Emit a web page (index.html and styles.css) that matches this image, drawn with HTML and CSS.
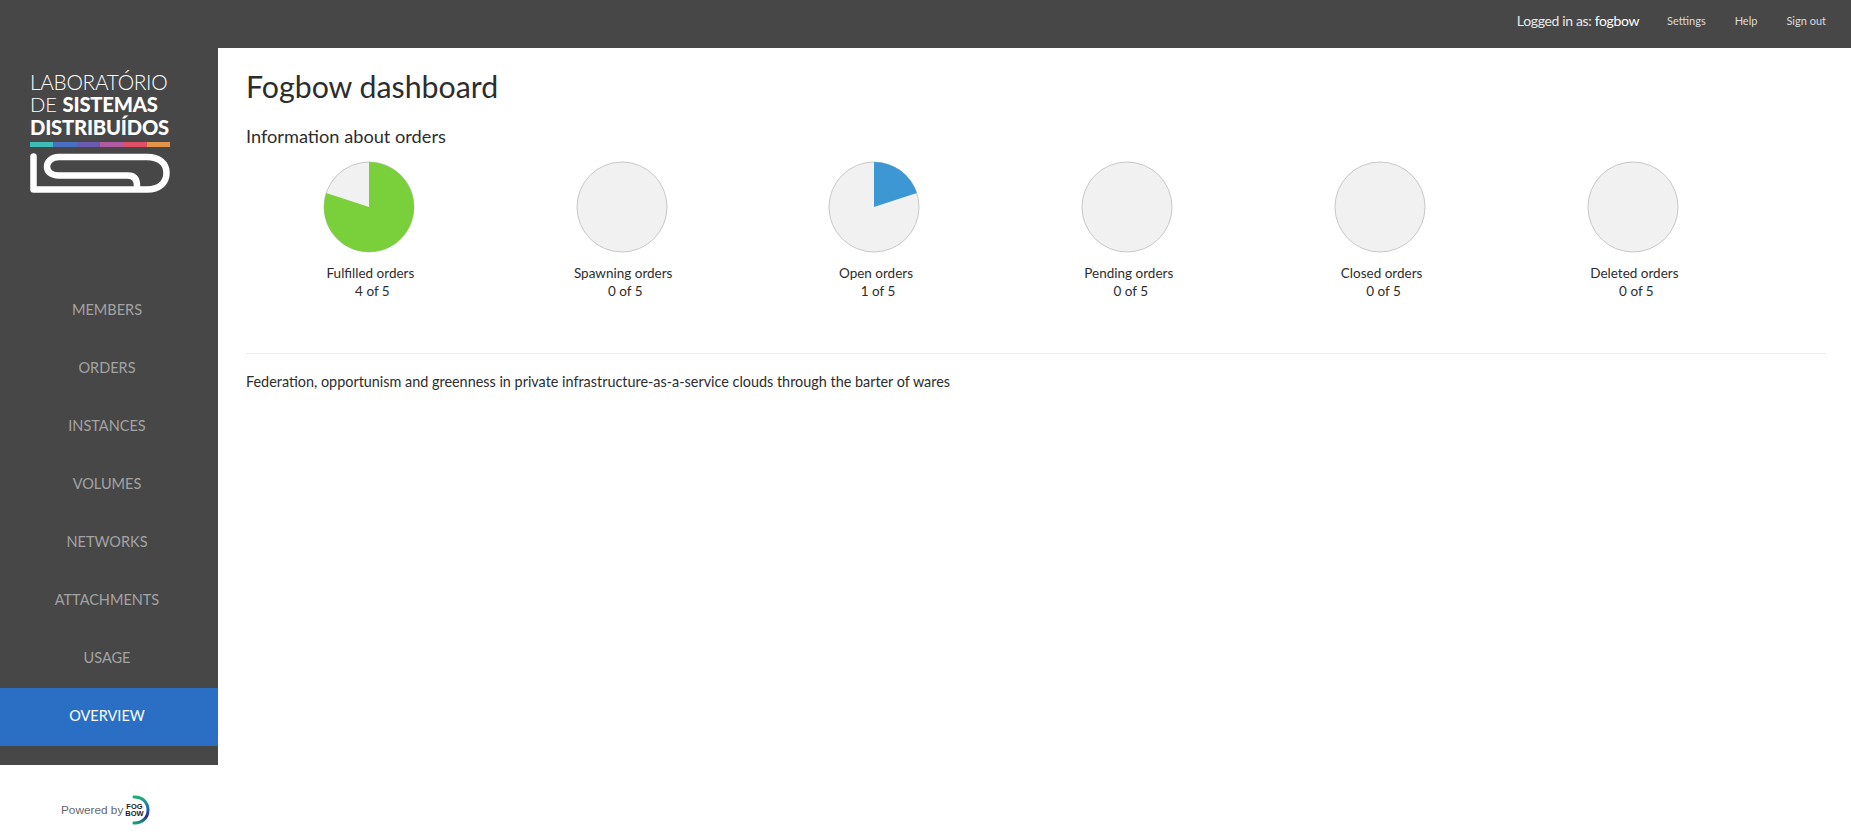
FILE: index.html
```html
<!DOCTYPE html>
<html lang="en">
<head>
<meta charset="utf-8">
<title>Fogbow dashboard</title>
<link rel="stylesheet" href="styles.css">
</head>
<body>
<header class="topbar">
  <div class="user">Logged in as: <strong>fogbow</strong></div>
  <a class="toplink" href="#">Settings</a>
  <a class="toplink" href="#">Help</a>
  <a class="toplink" href="#">Sign out</a>
</header>
<div class="layout">
  <aside class="left">
    <div class="sidebar">
      <div class="logo">
        <div class="logo-line l1">LABORATÓRIO</div>
        <div class="logo-line l2">DE <b>SISTEMAS</b></div>
        <div class="logo-line l3">DISTRIBUÍDOS</div>
        <div class="stripes"><i class="s1"></i><i class="s2"></i><i class="s3"></i><i class="s4"></i><i class="s5"></i><i class="s6"></i></div>
        <svg class="clip" width="140" height="41" viewBox="0 0 140 41" fill="none" stroke="#fff" stroke-width="6.500" stroke-linecap="round" stroke-linejoin="round">
          <path d="M3.500 3.500V36.500H117C129 36.500 136.500 30 136.500 20C136.500 10 129 4 117 4H29C21 4 17 9 17 13.500C17 19 21 22.500 29 22.500H98C104 22.500 107 26 107 33"/>
        </svg>
      </div>
      <nav class="nav">
        <a href="#">MEMBERS</a>
        <a href="#">ORDERS</a>
        <a href="#">INSTANCES</a>
        <a href="#">VOLUMES</a>
        <a href="#">NETWORKS</a>
        <a href="#">ATTACHMENTS</a>
        <a href="#">USAGE</a>
        <a href="#" class="active">OVERVIEW</a>
      </nav>
    </div>
    <div class="powered">
      <span>Powered by</span>
      <div class="fb">
        <div class="fb-text">FOG<br>BOW</div>
        <svg class="fb-arc" width="26" height="30" viewBox="0 0 26 30" fill="none">
          <defs><linearGradient id="arc" x1="0" y1="0" x2="0" y2="1"><stop offset="0" stop-color="#1fae6e"/><stop offset=".4" stop-color="#1f6fb0"/><stop offset=".75" stop-color="#2a2a8c"/><stop offset="1" stop-color="#17a07a"/></linearGradient></defs>
          <path d="M9 2C17 1.500 23 7 23 15C23 23 17 28.500 9 28" stroke="url(#arc)" stroke-width="3" stroke-linecap="round"/>
        </svg>
      </div>
    </div>
  </aside>
  <main class="main">
    <h1>Fogbow dashboard</h1>
    <h2>Information about orders</h2>
    <section class="charts">
      <figure class="chart">
        <svg class="pie" width="92" height="92" viewBox="0 0 92 92"><circle cx="46" cy="46" r="45" fill="#f1f1f1" stroke="#c8c8c8"/><path d="M46 46V1A45 45 0 1 1 3.200 32.100Z" fill="#7ad03a"/></svg>
        <figcaption>Fulfilled orders<span class="count">4 of 5</span></figcaption>
      </figure>
      <figure class="chart">
        <svg class="pie" width="92" height="92" viewBox="0 0 92 92"><circle cx="46" cy="46" r="45" fill="#f1f1f1" stroke="#c8c8c8"/></svg>
        <figcaption>Spawning orders<span class="count">0 of 5</span></figcaption>
      </figure>
      <figure class="chart">
        <svg class="pie" width="92" height="92" viewBox="0 0 92 92"><circle cx="46" cy="46" r="45" fill="#f1f1f1" stroke="#c8c8c8"/><path d="M46 46V1A45 45 0 0 1 88.800 32.100Z" fill="#3d97d3"/></svg>
        <figcaption>Open orders<span class="count">1 of 5</span></figcaption>
      </figure>
      <figure class="chart">
        <svg class="pie" width="92" height="92" viewBox="0 0 92 92"><circle cx="46" cy="46" r="45" fill="#f1f1f1" stroke="#c8c8c8"/></svg>
        <figcaption>Pending orders<span class="count">0 of 5</span></figcaption>
      </figure>
      <figure class="chart">
        <svg class="pie" width="92" height="92" viewBox="0 0 92 92"><circle cx="46" cy="46" r="45" fill="#f1f1f1" stroke="#c8c8c8"/></svg>
        <figcaption>Closed orders<span class="count">0 of 5</span></figcaption>
      </figure>
      <figure class="chart">
        <svg class="pie" width="92" height="92" viewBox="0 0 92 92"><circle cx="46" cy="46" r="45" fill="#f1f1f1" stroke="#c8c8c8"/></svg>
        <figcaption>Deleted orders<span class="count">0 of 5</span></figcaption>
      </figure>
    </section>
    <hr class="rule">
    <p class="desc">Federation, opportunism and greenness in private infrastructure-as-a-service clouds through the barter of wares</p>
  </main>
</div>
</body>
</html>
```

FILE: styles.css
```css
* { box-sizing: border-box; }
html, body { margin: 0; height: 100%; }
body { font-family: Lato, "Open Sans", sans-serif; color: #2d2d2d; background: #fff; overflow: hidden; }
a { text-decoration: none; color: inherit; }

.topbar { height: 48px; background: #474747; display: flex; align-items: center; justify-content: flex-end; padding: 0 25px 8px 0; color: #eee; }
.user { font-size: 14px; letter-spacing: -0.350px; margin-right: 28px; color: #e8e8e8; }
.user strong { font-weight: 400; color: #fff; }
.toplink { font-size: 11px; margin-left: 29px; padding-top: 1px; color: #dcdcdc; }
.toplink:first-of-type { margin-left: 0; }

.layout { display: flex; height: 792px; }
.left { width: 218px; flex: none; display: flex; flex-direction: column; }
.sidebar { height: 717px; background: #474747; padding-top: 22px; }
.logo { margin-left: 30px; width: 140px; color: #fff; }
.logo-line { font-size: 20.200px; line-height: 23px; height: 23px; white-space: nowrap; }
.l1 { font-size: 20.800px; font-weight: 300; letter-spacing: -0.300px; }
.l2 { font-weight: 300; }
.l2 b { font-weight: 900; letter-spacing: -0.200px; }
.l3 { font-weight: 900; letter-spacing: -0.200px; }
.stripes { display: flex; height: 5px; margin-top: 3px; }
.stripes i { flex: 1; }
.s1 { background: #3dbcb8; }
.s2 { background: #4a6fc0; }
.s3 { background: #6b5bb0; }
.s4 { background: #b05ba0; }
.s5 { background: #dd5064; }
.s6 { background: #e29448; }
.clip { display: block; margin-top: 6px; }

.nav { margin-top: 88px; display: flex; flex-direction: column; }
.nav a { height: 58px; display: flex; align-items: center; justify-content: center; padding: 0 4px 4px 0; font-size: 14.500px; color: #a3a3a3; }
.nav a.active { background: #2a6fc3; color: #fff; }

.powered { flex: 1; display: flex; align-items: center; padding: 15px 0 0 61px; font-family: "Liberation Sans", Arial, sans-serif; font-size: 11.800px; color: #666; }
.fb { display: flex; align-items: center; margin-left: 2px; }
.fb-text { font-size: 7.500px; line-height: 7px; font-weight: 700; color: #222; text-align: center; }
.fb-arc { margin-left: -19px; }

.main { flex: 1; padding: 0 25px 0 246px; margin-left: -218px; }
h1 { margin: 0; padding-top: 19px; font-size: 30.300px; line-height: 38px; font-weight: 400; color: #2d2d2d; }
h2 { margin: 0; padding-top: 20px; font-size: 18.200px; line-height: 22px; font-weight: 400; color: #2d2d2d; }
.charts { display: flex; margin: 14px 0 0 -2px; }
.chart { margin: 0; width: 252.800px; display: flex; flex-direction: column; align-items: center; }
.pie { display: block; margin-left: -3px; }
figcaption { margin-top: 11px; font-size: 13.500px; line-height: 18px; text-align: center; color: #2d2d2d; }
.count { display: block; padding-left: 4px; }
.rule { height: 1px; border: 0; background: #eee; margin: 53px 0 0; }
.desc { margin: 19px 0 0; font-size: 14.400px; line-height: 18px; color: #2d2d2d; }
```
